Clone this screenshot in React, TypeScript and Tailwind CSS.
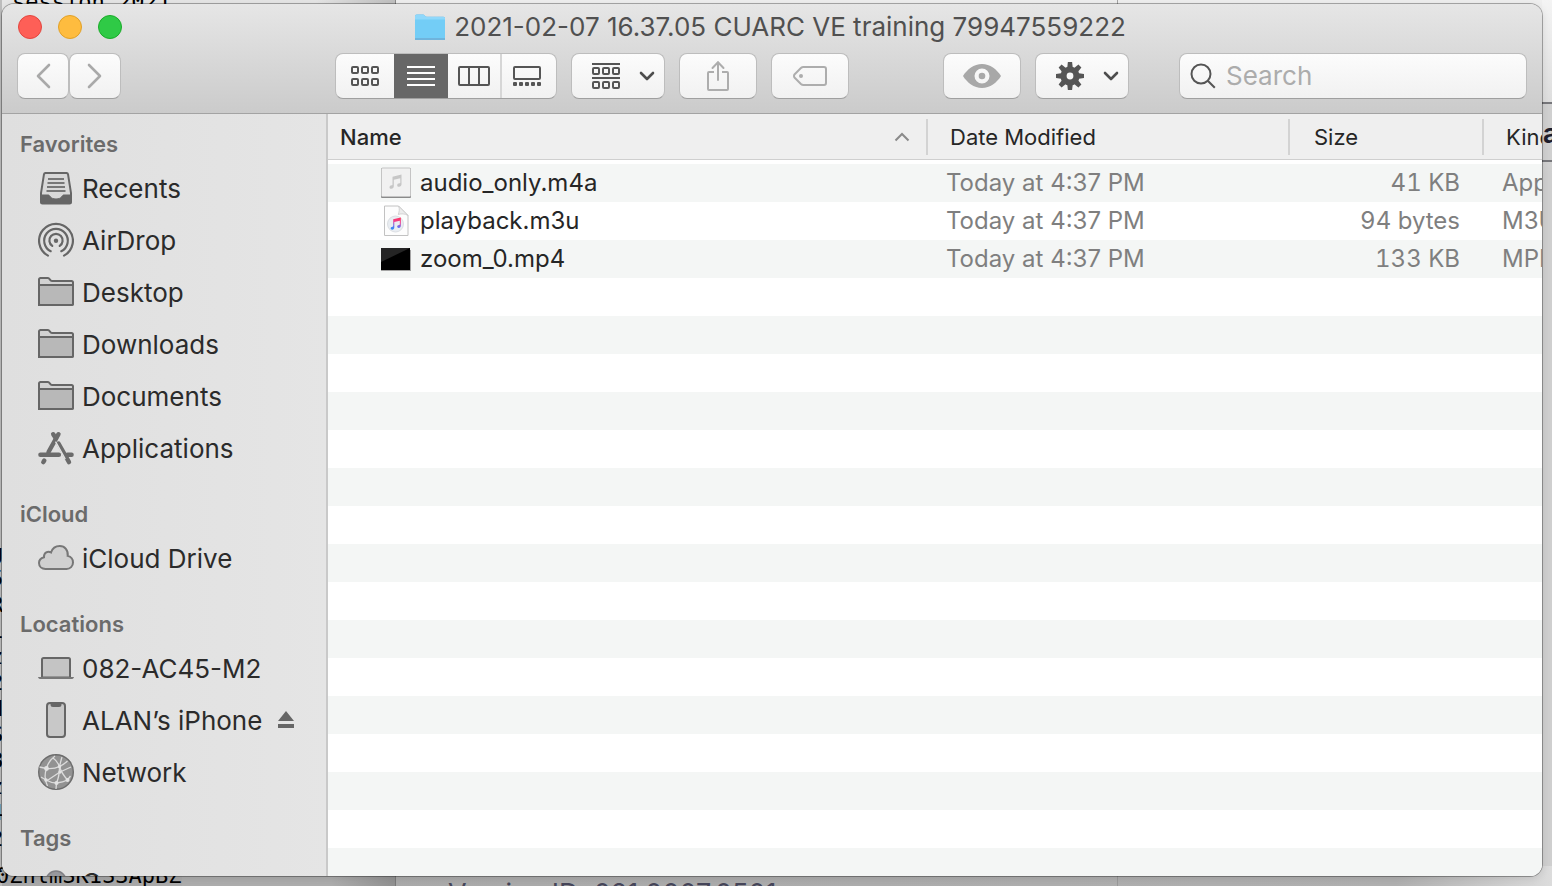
import type { ReactNode } from "react";

const FONT = "font-[Inter,'Liberation_Sans',sans-serif]";

/* ---------- Toolbar icons ---------- */

const GRID_COLUMNS = [1, 11, 21];

function Squares({ top }: { top: number }) {
  return (
    <>
      {GRID_COLUMNS.map((x) => (
        <rect key={x} x={x} y={top} width="6" height="6" rx="1" />
      ))}
    </>
  );
}

function IconViewGlyph() {
  return (
    <svg width="28" height="20" viewBox="0 0 28 20" fill="none" stroke="#555" strokeWidth="2">
      <Squares top={1} />
      <Squares top={13} />
    </svg>
  );
}

function ListViewGlyph() {
  return (
    <svg width="28" height="20" viewBox="0 0 28 20" fill="#fff">
      <path d="M0 0h28v2H0zM0 6h28v2H0zM0 12h28v2H0zM0 18h28v2H0z" />
    </svg>
  );
}

function ColumnViewGlyph() {
  return (
    <svg width="32" height="20" viewBox="0 0 32 20" fill="none" stroke="#555" strokeWidth="2">
      <rect x="1" y="1" width="30" height="18" rx="1" />
      <path d="M11 1v18M21 1v18" />
    </svg>
  );
}

function GalleryViewGlyph() {
  return (
    <svg width="28" height="20" viewBox="0 0 28 20" fill="none">
      <rect x="1" y="1" width="26" height="12" rx="1" stroke="#555" strokeWidth="2" />
      {[0, 6, 12, 18, 24].map((x) => (
        <rect key={x} x={x} y="16" width="4" height="4" rx="1" fill="#555" />
      ))}
    </svg>
  );
}

function ArrangeGlyph() {
  return (
    <svg width="28" height="26" viewBox="0 0 28 26" fill="none" stroke="#555" strokeWidth="2">
      <path d="M0 1h28M0 15h28" />
      <Squares top={5} />
      <Squares top={19} />
    </svg>
  );
}

function ChevronDown() {
  return (
    <svg width="16" height="10" viewBox="0 0 16 10" fill="none">
      <path d="M2 2l6 6 6-6" stroke="#4d4d4d" strokeWidth="2.6" strokeLinecap="round" strokeLinejoin="round" />
    </svg>
  );
}

function NavArrow({ forward = false }: { forward?: boolean }) {
  return (
    <svg width="16" height="26" viewBox="0 0 16 26" fill="none">
      <path
        d={forward ? "M2 2l11 11L2 24" : "M14 2L3 13l11 11"}
        stroke="#a9a9a9"
        strokeWidth="2.6"
        strokeLinecap="round"
        strokeLinejoin="round"
      />
    </svg>
  );
}

function ShareGlyph() {
  return (
    <svg width="24" height="32" viewBox="0 0 24 32" fill="none" stroke="#adadad" strokeWidth="2">
      <path d="M8 12H3a1 1 0 0 0-1 1v16a1 1 0 0 0 1 1h18a1 1 0 0 0 1-1V13a1 1 0 0 0-1-1h-5" />
      <path d="M12 20V3M6.500 8L12 2.200 17.500 8" strokeLinecap="round" />
    </svg>
  );
}

function TagGlyph() {
  return (
    <svg width="34" height="20" viewBox="0 0 34 20" fill="none">
      <path
        d="M10.500 1H31a2 2 0 0 1 2 2v14a2 2 0 0 1-2 2H10.500a4 4 0 0 1-2.600-1L1.700 11.700a2.400 2.400 0 0 1 0-3.400L7.900 2a4 4 0 0 1 2.600-1z"
        stroke="#adadad"
        strokeWidth="2"
      />
      <circle cx="8" cy="10" r="2" fill="#adadad" />
    </svg>
  );
}

function EyeGlyph() {
  return (
    <svg width="38" height="24" viewBox="0 0 38 24">
      <path
        fillRule="evenodd"
        fill="#a8a8a8"
        d="M0 12C4 5.500 11 0 19 0s15 5.500 19 12c-4 6.500-11 12-19 12S4 18.500 0 12zm19-7.500a7.500 7.500 0 1 0 0 15 7.500 7.500 0 0 0 0-15z"
      />
      <circle cx="19" cy="12" r="3.300" fill="#a8a8a8" />
    </svg>
  );
}

function GearGlyph() {
  return (
    <svg width="28" height="28" viewBox="0 0 28 28">
      <g fill="#555">
        {[0, 45, 90, 135].map((angle) => (
          <path key={angle} d="M11.900 0h4.200l.6 5v18l-.6 5h-4.200l-.6-5V5z" transform={`rotate(${angle} 14 14)`} />
        ))}
        <circle cx="14" cy="14" r="9.600" />
      </g>
      <circle cx="14" cy="14" r="3.400" fill="#f7f7f7" />
    </svg>
  );
}

function SearchGlyph() {
  return (
    <svg width="26" height="26" viewBox="0 0 26 26" fill="none" stroke="#555" strokeWidth="2">
      <circle cx="11" cy="11" r="9.500" />
      <path d="M17.800 17.800l7 7" />
    </svg>
  );
}

/* ---------- Sidebar icons ---------- */

function RecentsIcon() {
  return (
    <svg width="36" height="36" viewBox="0 0 36 36" fill="none">
      <path d="M7.500 3h21A1.500 1.500 0 0 1 30 4.200L33 23v9a1.500 1.500 0 0 1-1.500 1.500h-27A1.500 1.500 0 0 1 3 32v-9L6 4.200A1.500 1.500 0 0 1 7.500 3z" fill="#d8d8d8" stroke="#666" strokeWidth="2" />
      <path d="M10 9h16M9.500 13h17M9 17h18M8.500 21h19" stroke="#777" strokeWidth="2" />
      <path d="M3 25h7.500c1.500 0 1.500 4 7.500 4s6-4 7.500-4H33v7a1.500 1.500 0 0 1-1.500 1.500h-27A1.500 1.500 0 0 1 3 32z" fill="#666" stroke="#666" />
    </svg>
  );
}

function AirDropIcon() {
  return (
    <svg width="36" height="36" viewBox="0 -1 36 36" fill="none" stroke="#666" strokeWidth="2.200" strokeLinecap="round">
      <path d="M10 32.600a16.900 16.900 0 1 1 16 0" />
      <path d="M12.700 28.200a11.800 11.800 0 1 1 10.600 0" />
      <path d="M14.300 22.900a6.600 6.600 0 1 1 7.400 0" />
      <circle cx="18" cy="17.800" r="2.200" fill="#666" stroke="none" />
    </svg>
  );
}

function FolderIcon() {
  return (
    <svg width="36" height="36" viewBox="0 -1 36 36" fill="none" stroke="#666" strokeWidth="2">
      <path d="M1 30V4.500A1.500 1.500 0 0 1 2.500 3H10c1.800 0 1.800 3 4 3h19.500A1.500 1.500 0 0 1 35 7.500V28.500A1.500 1.500 0 0 1 33.500 30z" fill="#d2d2d2" />
      <path d="M1 10h34v18.500a1.500 1.500 0 0 1-1.500 1.500h-31A1.500 1.500 0 0 1 1 28.500z" fill="#b8b8b8" />
    </svg>
  );
}

function ApplicationsIcon() {
  return (
    <svg width="36" height="36" viewBox="0 -1 36 36" fill="none" stroke="#6b6b6b" strokeWidth="4.400" strokeLinecap="round">
      <path d="M20.500 3.200L10.500 21" />
      <path d="M15.200 3.200L18 7.500" />
      <path d="M2.400 23.800h18.500M29.500 23.800h4.100" />
      <path d="M20.500 12.500L31 31.200" />
      <path d="M6.300 29.500l-1 1.600" />
      <path d="M17.800 11.200L27 27.600" stroke="#e2e2e2" strokeWidth="1.400" />
    </svg>
  );
}

function CloudIcon() {
  return (
    <svg width="36" height="36" viewBox="0 0 36 36" fill="#d0d0d0" stroke="#777" strokeWidth="2">
      <path d="M7.500 29C3.800 29 1 26.500 1 23.100c0-3 2-5.200 5-5.900-.4-4.500 4-6.800 7-4.700C14.300 8.500 18 6 21.800 6c5 0 8.600 4.200 7.900 9.900 3.200.8 5.300 3.300 5.300 6.600 0 3.700-2.800 6.500-6.500 6.500z" />
    </svg>
  );
}

function LaptopIcon() {
  return (
    <svg width="36" height="36" viewBox="0 0 36 36" fill="none">
      <path d="M4 27.500V9.500A1.500 1.500 0 0 1 5.500 8h25A1.500 1.500 0 0 1 32 9.500v18z" fill="#c4c4c4" stroke="#666" strokeWidth="2" />
      <path d="M0 27h36c-.3 1.400-1.300 2-2.600 2H2.600C1.300 29 .3 28.400 0 27z" fill="#777" />
    </svg>
  );
}

function PhoneIcon() {
  return (
    <svg width="36" height="36" viewBox="0 0 36 36" fill="none">
      <rect x="9" y="1" width="18" height="34" rx="3" fill="#c8c8c8" stroke="#666" strokeWidth="2" />
      <path d="M12.500 1h11v1.500A2.500 2.500 0 0 1 21 5h-6a2.500 2.500 0 0 1-2.500-2.500z" fill="#666" />
    </svg>
  );
}

function NetworkIcon() {
  return (
    <svg width="36" height="36" viewBox="0 0 36 36" fill="none">
      <circle cx="18" cy="18" r="17.300" fill="#929292" stroke="#6c6c6c" strokeWidth="1.400" />
      <g stroke="#dcdcdc" strokeWidth="1.300">
        <path d="M17 2C12.500 5.500 9.500 10 8.500 14.500 6.500 20 6.500 26 9.500 32" />
        <path d="M24 3c-1 3-1.500 6-2.500 9.500 0 6-1 12-3 16.500l-.5 6" />
        <path d="M8.500 14.500c5 .5 9 0 13-2 3-1.500 5.500-3 8-5.500M8.500 14.500L1.500 13" />
        <path d="M15 4c3 2 5 5 6.500 8.500 1.500 5 4.500 9.500 8 13.500" />
        <path d="M8 26c3.500 2 7 3 10.500 3 4-.5 8-1.500 11-3l3-4M8 26l-5-3" />
        <path d="M22 18l-13.500 9M22 18l11-5" />
      </g>
      <g fill="#e2e2e2">
        <circle cx="8.500" cy="14.500" r="2.400" />
        <circle cx="21.500" cy="12.500" r="1.700" />
        <circle cx="22" cy="18" r="1.700" />
        <circle cx="18.500" cy="29" r="2" />
        <circle cx="29.500" cy="26" r="2" />
        <circle cx="8" cy="26" r="1.800" />
      </g>
    </svg>
  );
}

function TagDot() {
  return (
    <svg width="36" height="36" viewBox="0 0 36 36">
      <circle cx="18" cy="17" r="10" fill="#98989d" stroke="#808085" strokeWidth="1.500" />
    </svg>
  );
}

function EjectIcon() {
  return (
    <svg width="16" height="18" viewBox="0 0 16 18" fill="#666">
      <path d="M8 0l8 10H0zM0 13h16v4H0z" />
    </svg>
  );
}

/* ---------- File icons ---------- */

function NotePath({ fill }: { fill: string }) {
  return (
    <path
      d="M4 2.200L13 0v9.800c0 1.500-1 2.500-2.400 2.500-1.200 0-1.900-.7-1.900-1.600 0-1.200 1-1.700 2.100-1.900.7-.1 1-.3 1-.9V3.800L5.300 5.300v6.500c0 1.500-1 2.500-2.400 2.500C1.700 14.300 1 13.600 1 12.700c0-1.200 1-1.700 2.100-1.900.6-.1.900-.3.900-.9z"
      fill={fill}
    />
  );
}

function AudioFileIcon() {
  return (
    <svg width="32" height="34" viewBox="0 0 32 34">
      <rect x="1" y="2" width="30" height="30" rx="1" fill="#8a8a8a" />
      <rect x="1.500" y="2" width="29" height="28.500" rx="1" fill="#f1f1f1" stroke="#c4c4c4" />
      <g transform="translate(8.500 8.500)">
        <NotePath fill="#c6c6c6" />
      </g>
    </svg>
  );
}

function PlaylistFileIcon() {
  return (
    <svg width="32" height="34" viewBox="0 0 32 34">
      <defs>
        <linearGradient id="note" x1="0.6" y1="0" x2="0.4" y2="1">
          <stop offset="0" stopColor="#ff3560" />
          <stop offset="0.350" stopColor="#f03f90" />
          <stop offset="0.700" stopColor="#6a6cf0" />
          <stop offset="1" stopColor="#2f8df6" />
        </linearGradient>
      </defs>
      <path d="M4.500 2h14L28 11.500V31.500H4.500z" fill="#fdfdfd" stroke="#c2c2c2" strokeLinejoin="round" />
      <path d="M18.500 2c1.500 3 .5 6-.2 8.500C21 9.500 25 9.500 28 11.500z" fill="#ececec" stroke="#c9c9c9" strokeWidth="0.800" />
      <circle cx="15.500" cy="20" r="8" fill="#e9edf2" stroke="#dcdfe3" />
      <g transform="translate(9.800 13.500) scale(.85)">
        <NotePath fill="url(#note)" />
      </g>
    </svg>
  );
}

function MovieFileIcon() {
  return (
    <svg width="32" height="34" viewBox="0 0 32 34">
      <rect x="1" y="8" width="30" height="21" fill="#a5a5a5" />
      <rect x="1" y="6" width="29" height="22" fill="#000" />
      <path d="M1 6h29L1 20z" fill="#242424" />
    </svg>
  );
}

function TitleFolderIcon() {
  return (
    <svg width="32" height="28" viewBox="0 0 32 28">
      <path d="M1 27V3.200A1.700 1.700 0 0 1 2.700 1.500H9c1.500 0 2 2.200 3.500 2.200h17A1.500 1.500 0 0 1 31 5.200V27z" fill="#6fb4dc" />
      <path d="M1 7V3.200A1.700 1.700 0 0 1 2.700 1.500H9c1.500 0 2 2.200 3.500 2.200h17A1.500 1.500 0 0 1 31 5.200V7z" fill="#8fd8fb" />
      <path d="M1 6.500h30V25H1z" fill="#73cdf6" />
    </svg>
  );
}

/* ---------- Toolbar ---------- */

const BUTTON =
  "flex h-[46px] items-center rounded-lg border border-[#bdbdbd] border-b-[#9f9f9f] bg-linear-to-b from-[#fcfcfc] to-[#f1f1f1]";

function ToolbarButton({ label, layout, children }: { label: string; layout: string; children: ReactNode }) {
  return (
    <button type="button" aria-label={label} className={`${BUTTON} ${layout} shrink-0`}>
      {children}
    </button>
  );
}

function Toolbar() {
  return (
    <header className="shrink-0 border-b border-[#a3a3a3] bg-linear-to-b from-[#e6e6e6] to-[#cbcbcb] pb-3.5">
      <div className="flex h-[46px] items-center px-4">
        <div className="flex flex-1 gap-4">
          <button type="button" aria-label="Close" className="size-6 rounded-full border border-[#e2463f] bg-[#fe5f57]" />
          <button type="button" aria-label="Minimize" className="size-6 rounded-full border border-[#e0a028] bg-[#febc3f]" />
          <button type="button" aria-label="Zoom" className="size-6 rounded-full border border-[#1aab29] bg-[#2fca46]" />
        </div>
        <div className="flex items-center gap-2">
          <TitleFolderIcon />
          <h1 className="text-[26px] leading-8 whitespace-nowrap text-[#505050]">
            2021-02-07 16.37.05 CUARC VE training 79947559222
          </h1>
        </div>
        <div className="mr-1 flex-1" />
      </div>
      <div className="flex items-center px-[15px] pt-[3px]">
        <div className="flex">
          <ToolbarButton label="Back" layout="w-[52px] justify-center">
            <NavArrow />
          </ToolbarButton>
          <ToolbarButton label="Forward" layout="w-[52px] justify-center">
            <NavArrow forward />
          </ToolbarButton>
        </div>
        <div className="flex-[214]" />
        <div className="flex gap-3.5">
          <div className={`${BUTTON} w-[222px] overflow-hidden`}>
            <button type="button" aria-label="Icon view" className="flex h-full w-[58px] items-center justify-center">
              <IconViewGlyph />
            </button>
            <button type="button" aria-label="List view" className="flex h-full w-[54px] items-center justify-center bg-[#676767]">
              <ListViewGlyph />
            </button>
            <button type="button" aria-label="Column view" className="flex h-full w-[54px] items-center justify-center border-r-2 border-[#d6d6d6]">
              <ColumnViewGlyph />
            </button>
            <button type="button" aria-label="Gallery view" className="flex h-full w-[54px] items-center justify-center pr-1">
              <GalleryViewGlyph />
            </button>
          </div>
          <ToolbarButton label="Group items" layout="w-[94px] justify-between pr-[9px] pl-5">
            <ArrangeGlyph />
            <ChevronDown />
          </ToolbarButton>
          <ToolbarButton label="Share" layout="w-[78px] justify-center">
            <ShareGlyph />
          </ToolbarButton>
          <ToolbarButton label="Edit tags" layout="w-[78px] justify-center">
            <TagGlyph />
          </ToolbarButton>
        </div>
        <div className="flex-[94]" />
        <div className="flex gap-3.5">
          <ToolbarButton label="Quick look" layout="w-[78px] justify-center">
            <EyeGlyph />
          </ToolbarButton>
          <ToolbarButton label="Actions" layout="w-[94px] justify-between pr-[9px] pl-5">
            <GearGlyph />
            <ChevronDown />
          </ToolbarButton>
        </div>
        <div className="flex-[50]" />
        <label className={`${BUTTON} w-[348px] gap-2.5 px-2.5`}>
          <SearchGlyph />
          <input
            type="text"
            aria-label="Search"
            placeholder="Search"
            className="min-w-0 flex-1 bg-transparent text-[26px] leading-8 text-[#2c2c2c] outline-none placeholder:text-[#acacac]"
          />
        </label>
      </div>
    </header>
  );
}

/* ---------- Sidebar ---------- */

type Place = { name: string; icon: ReactNode; ejectable?: boolean };

const SECTIONS: { title: string; places: Place[] }[] = [
  {
    title: "Favorites",
    places: [
      { name: "Recents", icon: <RecentsIcon /> },
      { name: "AirDrop", icon: <AirDropIcon /> },
      { name: "Desktop", icon: <FolderIcon /> },
      { name: "Downloads", icon: <FolderIcon /> },
      { name: "Documents", icon: <FolderIcon /> },
      { name: "Applications", icon: <ApplicationsIcon /> },
    ],
  },
  { title: "iCloud", places: [{ name: "iCloud Drive", icon: <CloudIcon /> }] },
  {
    title: "Locations",
    places: [
      { name: "082-AC45-M2", icon: <LaptopIcon /> },
      { name: "ALAN’s iPhone", icon: <PhoneIcon />, ejectable: true },
      { name: "Network", icon: <NetworkIcon /> },
    ],
  },
  { title: "Tags", places: [{ name: "Gray", icon: <TagDot /> }] },
];

function Sidebar() {
  return (
    <nav className="flex w-[326px] shrink-0 flex-col gap-5 overflow-hidden border-r-2 border-[#c9c9c9] bg-linear-to-r from-[#dfdfdf] to-[#e5e5e5] pt-[11px]">
      {SECTIONS.map((section) => (
        <section key={section.title}>
          <h2 className="h-[38px] pl-[18px] text-[22px] leading-[38px] font-semibold text-[#6b6b6b]">{section.title}</h2>
          <ul>
            {section.places.map((place) => (
              <li key={place.name} className="flex h-[52px] items-center pr-8 pl-9">
                <a
                  href="#"
                  className="flex flex-1 items-center gap-2 text-[26px] leading-8 whitespace-nowrap text-[#2b2b2b] [&>svg]:mb-0.5"
                >
                  {place.icon}
                  {place.name}
                </a>
                {place.ejectable && (
                  <button type="button" aria-label={`Eject ${place.name}`} className="pb-0.5">
                    <EjectIcon />
                  </button>
                )}
              </li>
            ))}
          </ul>
        </section>
      ))}
    </nav>
  );
}

/* ---------- File list ---------- */

const FILES = [
  { name: "audio_only.m4a", icon: <AudioFileIcon />, modified: "Today at 4:37 PM", size: "41 KB", kind: "Apple MPEG-4 audio" },
  { name: "playback.m3u", icon: <PlaylistFileIcon />, modified: "Today at 4:37 PM", size: "94 bytes", kind: "M3U playlist" },
  { name: "zoom_0.mp4", icon: <MovieFileIcon />, modified: "Today at 4:37 PM", size: "133 KB", kind: "MPEG-4 movie" },
];

const HEADER_CELL = "flex h-9 items-center border-r-2 border-[#d3d3d3]";
const HEADER_EDGE = "border-b border-[#cfcfcf] p-0";

function FileList() {
  return (
    <main className="min-w-0 flex-1 overflow-hidden bg-white bg-[linear-gradient(to_bottom,#f4f6f5_38px,#ffffff_38px)] bg-[length:100%_76px] bg-[position:0_50px]">
      <table className="w-full table-fixed border-separate border-spacing-0 text-[24px] leading-8 whitespace-nowrap">
        <colgroup>
          <col />
          <col className="w-[362px]" />
          <col className="w-[194px]" />
          <col className="w-[58px]" />
        </colgroup>
        <thead>
          <tr className="h-[46px] bg-[#efefef] text-left text-[22px] text-[#262626]">
            <th className={`${HEADER_EDGE} font-medium`}>
              <div className={`${HEADER_CELL} justify-between pr-4 pl-3`}>
                Name
                <svg width="16" height="10" viewBox="0 0 16 10" fill="none">
                  <path d="M1.500 8.500L8 2l6.500 6.500" stroke="#8a8a8a" strokeWidth="2" />
                </svg>
              </div>
            </th>
            <th className={`${HEADER_EDGE} font-normal`}>
              <div className={`${HEADER_CELL} pl-[22px]`}>Date Modified</div>
            </th>
            <th className={`${HEADER_EDGE} font-normal`}>
              <div className={`${HEADER_CELL} pl-6`}>Size</div>
            </th>
            <th className={`${HEADER_EDGE} overflow-hidden font-normal`}>
              <div className="flex h-9 items-center pl-[22px]">Kind</div>
            </th>
          </tr>
        </thead>
        <tbody className="before:block before:h-1">
          {FILES.map((file) => (
            <tr key={file.name} className="h-[38px] text-[#7f7f7f]">
              <td className="p-0 pl-[52px]">
                <div className="flex items-center gap-2 text-[#262626]">
                  {file.icon}
                  {file.name}
                </div>
              </td>
              <td className="p-0 pl-[18px]">{file.modified}</td>
              <td className="p-0 pr-6 text-right tabular-nums">{file.size}</td>
              <td className="overflow-hidden p-0 pl-[18px]">{file.kind}</td>
            </tr>
          ))}
        </tbody>
      </table>
    </main>
  );
}

/* ---------- Windows behind the Finder window ---------- */

const TERMINAL_LINES = ["g", "5", "R", "1", "z", "2", "d", "S", "8", "z", "4", "2", "1"];

const MONO = "font-['DejaVu_Sans_Mono',monospace] text-[22px] text-black";

function Backdrop() {
  return (
    <div aria-hidden="true" className="absolute inset-0 overflow-hidden bg-[#efefef]">
      <div className="absolute inset-y-0 left-0 w-[396px] border-r border-[#8a8a8a] bg-linear-to-r from-[#e6e6e6] from-80% to-[#c0c0c0]" />
      <div className="absolute inset-y-0 left-[1117px] border-l border-[#a5a5a5]" />
      <div className="absolute inset-x-0 bottom-0 h-5 bg-linear-to-r from-[#a8a8a8] via-[#b0b0b0] via-90% to-[#dcdcdc]" />
      <div className="absolute bottom-0 left-[182px] h-5 w-[214px] border-r border-[#7a7a7a] bg-linear-to-r from-[#adadad] from-70% to-[#919191]" />
      <div className="absolute bottom-0 left-[1117px] h-5 border-l border-[#999]" />
      <div className="absolute inset-y-0 left-0 w-0.5 bg-[#bdbdbd]" />
      <div className="absolute top-0 right-0 bottom-5 w-2.5 bg-linear-to-b from-[#f4f4f4] to-[#cfcfcf] to-20%" />
      <div className="absolute top-[102px] right-0 h-[60px] w-2.5 border-y-2 border-[#77777b] bg-[#d0d0d0]" />
      <pre className={`absolute -top-2 left-3 leading-5 ${MONO}`}>session 2021</pre>
      <pre className={`absolute top-[540px] left-[-10px] leading-[26px] ${MONO}`}>{TERMINAL_LINES.join("\n")}</pre>
      <pre className={`absolute bottom-0 left-[-4px] w-[186px] overflow-hidden leading-5 ${MONO}`}>0ZhlmSK1S3ApBZJ</pre>
      <p className="absolute bottom-[-22px] left-[448px] text-[27px] leading-7 text-[#46465a]">Version ID: 021.0007.0501</p>
    </div>
  );
}

export default function App() {
  return (
    <div className={`relative flex h-screen overflow-hidden pt-1 pr-2.5 pb-2.5 pl-0.5 ${FONT}`}>
      <Backdrop />
      <div className="relative flex min-w-0 flex-1 flex-col overflow-hidden rounded-xl shadow-[0_0_0_1px_rgba(0,0,0,0.3),0_2px_8px_rgba(0,0,0,0.12)]">
        <Toolbar />
        <div className="flex min-h-0 flex-1">
          <Sidebar />
          <FileList />
        </div>
      </div>
      <span aria-hidden="true" className="absolute top-[118px] right-[-6px] text-[26px] leading-8 font-bold text-[#1e1e2c]">
        a
      </span>
    </div>
  );
}
